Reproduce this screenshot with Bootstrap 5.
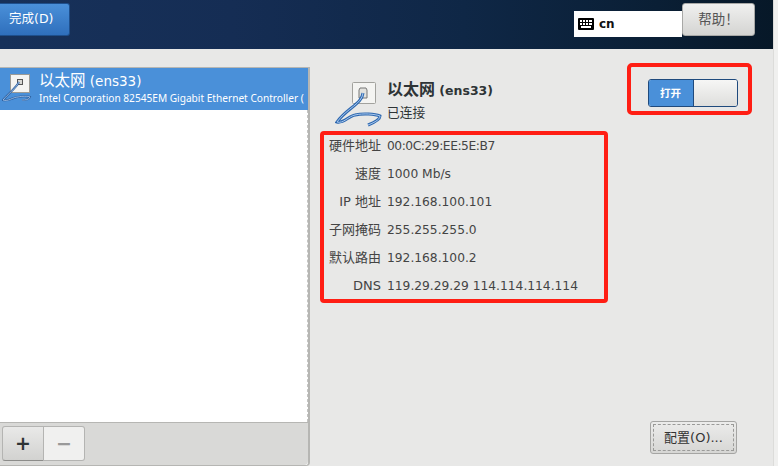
<!DOCTYPE html>
<html lang="zh">
<head>
<meta charset="utf-8">
<title>网络</title>
<link href="https://cdn.jsdelivr.net/npm/bootstrap@5.3.0/dist/css/bootstrap.min.css" rel="stylesheet">
<style>
html,body{height:100%;overflow:hidden}
body{width:778px;height:466px;background:#f0f0ef;color:#2e3436;font-family:"DejaVu Sans","Noto Sans CJK SC",sans-serif;font-size:12.25px;line-height:1.2}
.app-shell{width:774px;height:466px;background:#e8e8e7;border-right:1px solid #dcdcda}
.topbar{height:49px;background:linear-gradient(90deg,#17315a 0,#152d54 30%,#0f2746 60%,#0a1f35 85%,#071828 100%)}
.done-btn{width:70px;height:33px;margin-top:3px;background:linear-gradient(#4a90d9,#2f6fbc);border:1px solid #1e4f8c;border-left:0;border-radius:0 3px 3px 0;color:#fff;font-size:12.5px;padding:0 0 0 9px;text-align:left}
.kb-box{width:108px;height:26px;margin-top:11px;background:#fff;color:#111;font-weight:700;font-size:12px;padding-left:4px;gap:5px}
.help-btn{width:73px;height:33px;margin-top:3px;margin-right:18px;background:linear-gradient(#f0f0ef,#d4d4d2);border:1px solid #a8a8a6;border-radius:3px;color:#555;font-size:13.5px;padding:0}
.panes{height:417px}
.leftpane{width:310px;margin-top:18px;border-right:2px solid #b6b6b3;border-bottom:1px solid #b6b6b3;border-top:1px solid #b6b6b3;border-bottom-right-radius:4px;background:#fff}
.netrow{height:42px;background:#4a90d9;color:#fff;padding-left:2px;gap:3px;white-space:nowrap;overflow:hidden}
.netname{font-size:13.5px;line-height:17px}
.zh-name{font-size:15.5px}
.netsub{font-family:"Noto Sans",sans-serif;font-size:10.15px;line-height:14px;margin-top:1px}
.listspace{border-right:1px dashed #c4c4c2}
.toolbar-strip{height:43px;background:#d9d9d7;border-top:1px solid #b6b6b3;padding:3px 0 3px 2px;border-bottom-right-radius:4px}
.tool-on,.tool-off{width:42px;height:35px;padding:0;font-size:19px;line-height:1;border:1px solid #b4b4b2}
.tool-on{background:linear-gradient(#e9e9e8,#d2d2d0);border-radius:3px 0 0 3px;color:#2e3436;font-weight:700;border-bottom-color:#8c8c8a}
.tool-off{width:41px;background:#f0f0ef;border-left:0;border-radius:0 3px 3px 0;color:#999;font-weight:700}
.rightpane{padding:14px 21px 0 10px;width:463px}
.wire-icon{width:48px;height:48px;margin-left:15px;margin-top:17px;flex:none}
.head-text{padding-left:4px;padding-top:18px}
.head-title{font-size:12.5px;font-weight:700;line-height:18px}
.zh-title{font-size:16px}
.head-sub{font-size:12.75px;margin-top:5px;line-height:16px}
.switch-frame{width:125px;height:52px;border:4px solid #ff1e14;border-radius:5px}
.sw-wrap{width:90px;height:28px;margin:8px 0 0 6px;border:1px solid #1f4a7d;border-radius:3px;overflow:hidden}
.sw-on{width:44px;background:#4a90d9;color:#fff;font-size:10.5px;font-weight:700}
.sw-knob{flex:1;background:linear-gradient(#f6f6f5,#dededc);border-left:1px solid #1f4a7d}
.detail-frame{width:288px;height:172px;margin-top:3px;border:4px solid #ff1e14;border-radius:4px;padding-top:1px}
.drow{height:28px;line-height:20px;gap:6px}
.dlabel{width:57px;text-align:right;color:#444;font-size:13px;white-space:nowrap;flex:none}
.dval{color:#444;white-space:nowrap}
.dval-mac{letter-spacing:-.45px}
.cfg-btn{width:87px;height:33px;background:linear-gradient(#ececeb,#d6d6d4);border:1px solid #a5a5a3;border-radius:3px;outline:1px dashed #9a9a98;outline-offset:-4px;color:#333;font-size:13px;padding:0;margin-right:15px;margin-bottom:12px}
</style>
</head>
<body>
<div class="app-shell d-flex flex-column">
<div class="topbar d-flex align-items-start">
  <button class="btn done-btn" type="button">完成(D)</button>
  <div class="flex-grow-1"></div>
  <div class="kb-box d-flex align-items-center">
    <svg width="16" height="12" viewBox="0 0 16 12"><rect width="16" height="12" rx="1" fill="#000"/><g fill="#fff"><rect x="2" y="2" width="2" height="2"/><rect x="5" y="2" width="2" height="2"/><rect x="8" y="2" width="2" height="2"/><rect x="11" y="2" width="3" height="2"/><rect x="2" y="5" width="2" height="2"/><rect x="5" y="5" width="2" height="2"/><rect x="8" y="5" width="2" height="2"/><rect x="11" y="5" width="3" height="2"/><rect x="3" y="8" width="10" height="2"/></g></svg>
    <span>cn</span>
  </div>
  <button class="btn help-btn" type="button">帮助！</button>
</div>
<div class="panes d-flex">
  <div class="leftpane d-flex flex-column">
    <div class="netrow d-flex align-items-center">
      <svg width="34" height="34" viewBox="0 0 34 34" class="flex-shrink-0">
        <rect x="8.5" y="2.5" width="19" height="18" fill="#f4f4f2" stroke="#9a9a96"/>
        <rect x="15.5" y="7.5" width="5" height="5" fill="#d8d8d4" stroke="#555"/>
        <path d="M17 10C14 16 6 22 1 28C6 30 11 25 16 25C20 24 26 24 28 25C27 28 23 28 20 28" fill="none" stroke="#2c5f9e" stroke-width="2"/>
        <path d="M17 10C14 16 6 22 1 28C6 30 11 25 16 25C20 24 26 24 28 25C27 28 23 28 20 28" fill="none" stroke="#a9c8ee" stroke-width=".8"/>
      </svg>
      <div>
        <div class="netname"><span class="zh-name">以太网</span> (ens33)</div>
        <div class="netsub">Intel Corporation 82545EM Gigabit Ethernet Controller (</div>
      </div>
    </div>
    <div class="listspace flex-grow-1"></div>
    <div class="toolbar-strip d-flex">
      <button class="btn tool-on" type="button">+</button>
      <button class="btn tool-off" type="button">−</button>
    </div>
  </div>
  <div class="rightpane d-flex flex-column">
    <div class="d-flex">
      <svg class="wire-icon" viewBox="0 0 48 48">
        <rect x="17.5" y="2.5" width="23" height="21" rx="1" fill="#f4f4f2" stroke="#a2a29e"/>
        <path d="M24 10l1-2h6l1 2v8h-8z" fill="#e2e2de" stroke="#777"/>
        <path d="M28 13C27 24 12 28 2 42C8 44 14 36 20 35C28 33 40 34 45 36C45 40 38 43 33 45" fill="none" stroke="#2f69b0" stroke-width="3"/>
        <path d="M28 13C27 24 12 28 2 42C8 44 14 36 20 35C28 33 40 34 45 36C45 40 38 43 33 45" fill="none" stroke="#a9c8ee" stroke-width="1"/>
      </svg>
      <div class="head-text flex-grow-1">
        <div class="head-title"><span class="zh-title">以太网</span> (ens33)</div>
        <div class="head-sub">已连接</div>
      </div>
      <div class="switch-frame d-flex align-items-center justify-content-center">
        <div class="sw-wrap d-flex">
          <div class="sw-on d-flex align-items-center justify-content-center">打开</div>
          <div class="sw-knob"></div>
        </div>
      </div>
    </div>
    <div class="detail-frame">
      <div class="drow d-flex"><div class="dlabel">硬件地址</div><div class="dval dval-mac">00:0C:29:EE:5E:B7</div></div>
      <div class="drow d-flex"><div class="dlabel">速度</div><div class="dval">1000 Mb/s</div></div>
      <div class="drow d-flex"><div class="dlabel">IP 地址</div><div class="dval">192.168.100.101</div></div>
      <div class="drow d-flex"><div class="dlabel">子网掩码</div><div class="dval">255.255.255.0</div></div>
      <div class="drow d-flex"><div class="dlabel">默认路由</div><div class="dval">192.168.100.2</div></div>
      <div class="drow d-flex"><div class="dlabel">DNS</div><div class="dval">119.29.29.29 114.114.114.114</div></div>
    </div>
    <div class="flex-grow-1"></div>
    <div class="d-flex justify-content-end"><button class="btn cfg-btn" type="button">配置(O)...</button></div>
  </div>
</div>
</div>
</body>
</html>
